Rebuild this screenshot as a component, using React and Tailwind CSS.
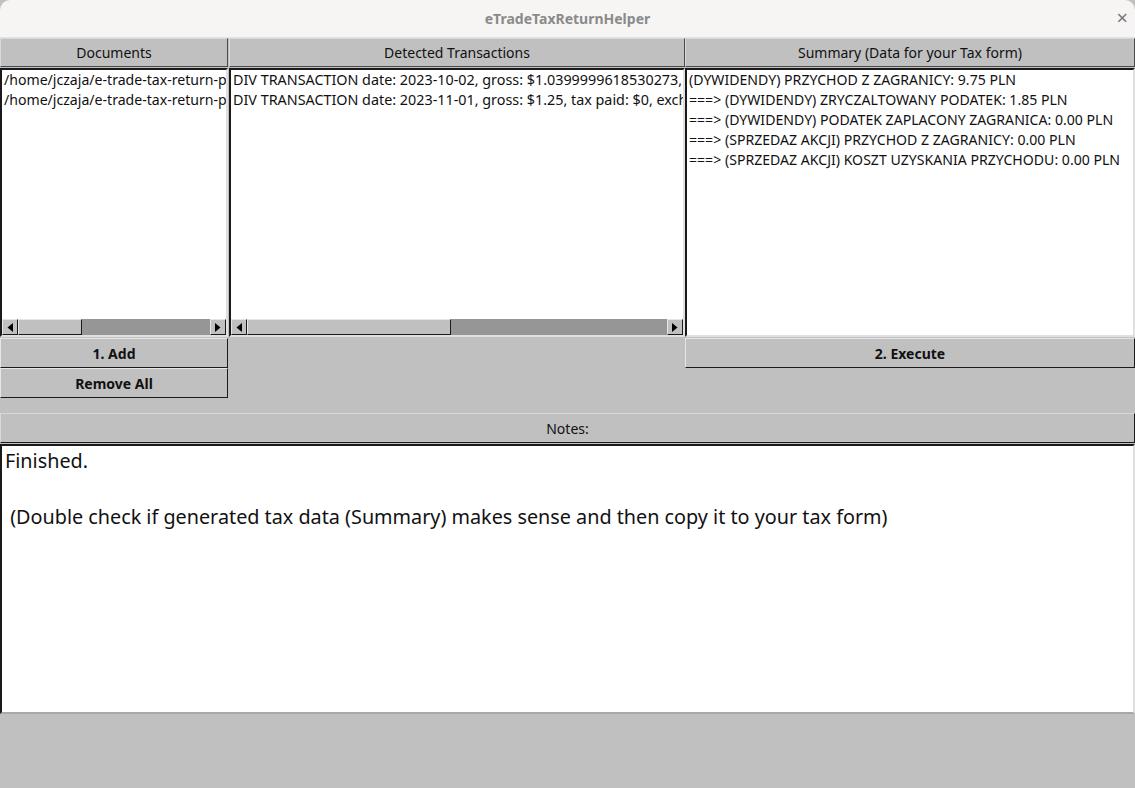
import React from "react";

const font = { fontFamily: '"Noto Sans", "Open Sans", sans-serif' };

function UpBox({ className = "", children }) {
  return (
    <div
      className={
        "flex items-center justify-center border border-t-[#e6e6e6] border-l-[#e6e6e6] border-b-[#1a1a1a] border-r-[#1a1a1a] bg-[#c0c0c0] " +
        className
      }
    >
      {children}
    </div>
  );
}

function Header({ children, className = "" }) {
  return (
    <div className={"h-[29px] mb-px flex items-center justify-center border border-t-[#d8d8d8] border-l-[#d8d8d8] border-b-[#4a4a4a] border-r-[#4a4a4a] bg-[#c0c0c0] text-[14px] text-[#111] " + className}>
      {children}
    </div>
  );
}

function Arrow({ dir }) {
  return (
    <div className="w-[16px] h-[16px] shrink-0 flex items-center justify-center border border-t-[#e6e6e6] border-l-[#e6e6e6] border-b-[#1a1a1a] border-r-[#1a1a1a] bg-[#c0c0c0]">
      <svg width="6" height="9" viewBox="0 0 6 9">
        {dir === "left" ? (
          <polygon points="6,0 6,9 0.5,4.5" fill="#000" />
        ) : (
          <polygon points="0,0 0,9 5.5,4.5" fill="#000" />
        )}
      </svg>
    </div>
  );
}

function Scrollbar({ thumbStart, thumbWidth }) {
  return (
    <div className="h-[16px] flex shrink-0 bg-[#969696]">
      <Arrow dir="left" />
      <div className="flex-1 flex">
        <div style={{ width: thumbStart }} className="shrink-0" />
        <div
          style={{ width: thumbWidth }}
          className="shrink-0 h-[16px] border border-t-[#e6e6e6] border-l-[#e6e6e6] border-b-[#1a1a1a] border-r-[#1a1a1a] bg-[#c0c0c0]"
        />
      </div>
      <Arrow dir="right" />
    </div>
  );
}

function ListBox({ lines, scroll, textClass = "text-[14.1px]" }) {
  return (
    <div className="h-[269px] flex flex-col border-2 border-t-[#1a1a1a] border-l-[#1a1a1a] border-b-[#e0e0e0] border-r-[#e0e0e0] bg-white">
      <div className={"flex-1 overflow-hidden pl-[2px] leading-[20px] text-[#111] " + textClass}>
        {lines.map((l, i) => (
          <div key={i} className="whitespace-nowrap">
            {l}
          </div>
        ))}
      </div>
      {scroll && <Scrollbar thumbStart={scroll[0]} thumbWidth={scroll[1]} />}
    </div>
  );
}

export default function App() {
  return (
    <div style={font} className="w-[1135px] h-[788px] overflow-hidden bg-[#c0c0c0] flex flex-col">
      {/* title bar */}
      <div className="h-[38px] shrink-0 relative flex items-center justify-center bg-[#f6f5f4] rounded-t-[10px] border-b border-[#e2e2e2]">
        <span className="text-[14px] font-bold text-[#8a8a8a]">eTradeTaxReturnHelper</span>
        <span className="absolute right-[7px] top-[7px] text-[20px] text-[#777] leading-[22px]">×</span>
      </div>

      {/* top row */}
      <div className="flex h-[360px] shrink-0">
        <div className="w-[228px] shrink-0 flex flex-col">
          <Header>Documents</Header>
          <ListBox
            lines={[
              "/home/jczaja/e-trade-tax-return-pl-helper/data/dividends_2023.pdf",
              "/home/jczaja/e-trade-tax-return-pl-helper/data/dividends_2023_q4.pdf",
            ]}
            scroll={[0, 64]}
          />
          <UpBox className="h-[30px] mt-px text-[14px] font-bold text-[#111]">1. Add</UpBox>
          <UpBox className="h-[30px] text-[14px] font-bold text-[#111]">Remove All</UpBox>
        </div>
        <div className="w-[456px] shrink-0 flex flex-col ml-px">
          <Header>Detected Transactions</Header>
          <ListBox
            textClass="text-[14.35px]"
            lines={[
              "DIV TRANSACTION date: 2023-10-02, gross: $1.0399999618530273,  tax paid: $0.1599999964237213, exchange rate: 4.3600",
              "DIV TRANSACTION date: 2023-11-01, gross: $1.25, tax paid: $0, exchange rate: 4.2138",
            ]}
            scroll={[0, 204]}
          />
        </div>
        <div className="flex-1 flex flex-col">
          <Header>Summary (Data for your Tax form)</Header>
          <ListBox
            lines={[
              "(DYWIDENDY) PRZYCHOD Z ZAGRANICY: 9.75 PLN",
              "===> (DYWIDENDY) ZRYCZALTOWANY PODATEK: 1.85 PLN",
              "===> (DYWIDENDY) PODATEK ZAPLACONY ZAGRANICA: 0.00 PLN",
              "===> (SPRZEDAZ AKCJI) PRZYCHOD Z ZAGRANICY: 0.00 PLN",
              "===> (SPRZEDAZ AKCJI) KOSZT UZYSKANIA PRZYCHODU: 0.00 PLN",
            ]}
          />
          <UpBox className="h-[30px] mt-px text-[14px] font-bold text-[#111]">2. Execute</UpBox>
        </div>
      </div>

      <div className="h-[15px] shrink-0" />

      {/* Notes */}
      <div className="h-[30px] shrink-0 flex items-center justify-center border border-t-[#d8d8d8] border-l-[#d8d8d8] border-b-[#1a1a1a] border-r-[#1a1a1a] bg-[#c0c0c0] text-[14px] text-[#111]">
        Notes:
      </div>
      <div className="h-[270px] shrink-0 mt-px border-2 border-t-[#1a1a1a] border-l-[#1a1a1a] border-b-[#a8a8a8] border-r-[#e0e0e0] bg-white pl-[3px] pt-[1px] text-[19.8px] leading-[28px] text-[#111]">
        <div>Finished.</div>
        <div className="h-[28px]" />
        <div className="whitespace-pre"> (Double check if generated tax data (Summary) makes sense and then copy it to your tax form)</div>
      </div>
      <div className="flex-1" />
    </div>
  );
}
